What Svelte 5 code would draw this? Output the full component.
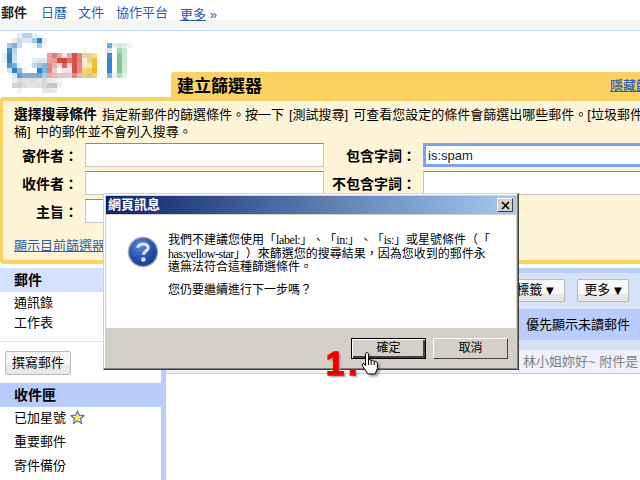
<script>
  const rows = [
    "3:e8f0f6 4:b5d6ee 5:b5d6ee 6:e8f0f6",
    "2:e4edf4 3:c8dcec 4:dde8f0 5:dde8f0 6:a8cbe4 7:2a85c8 8:e6eef4",
    "1:a8c8e4 2:80b4dc 3:c8dcec 6:f0f4f8 7:a8cce4 8:f4f6f8 21:70aadc 22:e8eef4 23:d0ecd8 24:e0f0e4 25:f0f6f2",
    "1:3f8fcc 2:b8d4e8 16:fbf6e0 21:d8e4ee 23:a0dcb0 24:c8e8d0",
    "0:e8eff4 1:2a80c4 2:c8dce8 9:e4a0a0 10:e07c78 11:e8a4a0 12:f8e8e8 13:e4a8a8 14:d0554e 15:dd8a7a 16:e8d8a0 17:e0d0a0 18:f4dc90 21:3b8fcc 23:84cc9c 24:c8e8d0",
    "0:eef2f6 1:2a80c4 2:d0e0ec 6:e8f0f6 7:d8e6f0 8:d8e8f0 9:e6a0a0 10:e89898 11:d84a40 12:d8443c 13:e07070 14:d85048 15:e07e78 16:fff4d0 17:f0d888 18:f0c040 21:2f88c8 23:78c890 24:c8e8d0",
    "1:4c98d0 2:78b0d8 3:f0f4f8 6:c0d8e8 7:a0c4e0 8:80b4d8 9:e08888 10:eab0b0 11:f6e0e0 12:dc6860 13:e8d8d8 14:d85048 15:e88880 16:f8ecc8 17:f8e8b0 18:f0c030 21:2f88c8 23:78c890 24:d0ecd8",
    "1:d0e0ec 2:2a80c4 3:88b8dc 4:f0f4f8 7:2a85c8 8:80b4d8 9:e08080 10:f0c8c8 12:f0e4e4 13:f0e0e0 14:d05048 15:e88880 16:f6d878 17:f4d060 18:f0b820 21:2f88c8 23:78c890 24:d0ecd8",
    "2:dde8f0 3:5a9ccc 4:80b0d8 5:80b0d8 6:80b0d8 7:70a8d0 8:b0cce0 9:e4a8a8 10:e8b8b8 11:d8cccc 12:d8cccc 13:dcd0d0 14:d88888 15:e8b8b8 16:e4d090 17:e0c880 18:e4d090 21:80b4dc 22:f0f0f0 23:b0dcbc 24:e4f0e8",
    "2:eeeeee 3:d8d8d8 4:e0e0e0 5:e0e0e0 6:dcdcdc 7:e4e4e4 8:d8d8d8 9:e8e8e8 10:f0f0f0 11:f4f4f4",
    "2:d4d4d4 3:d0d0d0 4:dcdcdc 5:e4e4e4 6:e4e4e4 7:dcdcdc 8:d8d8d8 9:c8c8c8 10:c4c4c4 11:f0f0f0",
    "3:f4f4f4 8:e8e8e8 9:e4e4e4 10:ececec"
  ];
  const cells = rows.flatMap((row, r) =>
    row.split(" ").map((item) => {
      const [c, color] = item.split(":");
      return { x: Number(c) * 5, y: r * 5, color: "#" + color };
    })
  );
</script>

<div class="page">
  <nav class="topbar">
    <b class="current">郵件</b>
    <a href="#a" class="t1">日曆</a>
    <a href="#a" class="t2">文件</a>
    <a href="#a" class="t3">協作平台</a>
    <a href="#a" class="more"><u>更多</u> »</a>
  </nav>

  <header class="head">
    <svg class="logo" width="130" height="60" viewBox="0 0 130 60" shape-rendering="crispEdges" role="img" aria-label="Gmail">
      {#each cells as cell}
        <rect x={cell.x} y={cell.y} width="5" height="5" fill={cell.color} />
      {/each}
    </svg>
    <div class="tab">
      <h1>建立篩選器</h1>
      <a href="#a" class="hide">隱藏篩選器</a>
    </div>
  </header>

  <section class="panel">
    <p class="intro"><b>選擇搜尋條件</b> 指定新郵件的篩選條件。按一下 [測試搜尋] 可查看您設定的條件會篩選出哪些郵件。[垃圾郵件<br />桶] 中的郵件並不會列入搜尋。</p>
    <div class="form">
      <label class="l1">寄件者：</label>
      <div class="field"></div>
      <label class="l2">包含字詞：</label>
      <div class="field focus">is:spam</div>
      <label class="l1">收件者：</label>
      <div class="field"></div>
      <label class="l2">不包含字詞：</label>
      <div class="field"></div>
      <label class="l1">主旨：</label>
      <div class="field"></div>
    </div>
    <a href="#a" class="show">顯示目前篩選器</a>
  </section>

  <div class="lower">
    <aside class="side">
      <div class="mail"><b>郵件</b></div>
      <div class="item first">通訊錄</div>
      <div class="item">工作表</div>
      <div class="rule"></div>
      <div class="compose">撰寫郵件</div>
      <div class="inbox"><b>收件匣</b></div>
      <div class="label">已加星號
        <svg class="star" width="15" height="15" viewBox="0 0 15 15">
          <path d="M7.5 1 L9.4 5.2 L14 5.7 L10.6 8.8 L11.6 13.5 L7.5 11.1 L3.4 13.5 L4.4 8.8 L1 5.7 L5.6 5.2 Z" fill="#fbe85a" stroke="#4a78b8" stroke-width="1.2" stroke-linejoin="round" />
        </svg>
      </div>
      <div class="label">重要郵件</div>
      <div class="label">寄件備份</div>
    </aside>

    <main class="main">
      <div class="inner">
        <div class="toolbar">
          <div class="btn tag">標籤 <i>▼</i></div>
          <div class="btn mo">更多 <i>▼</i></div>
        </div>
        <div class="band">優先顯示未讀郵件</div>
        <div class="thin"></div>
      </div>
      <div class="msg">- 林小姐妳好~ 附件是</div>
    </main>
  </div>

  <div class="dialog" role="dialog">
    <div class="title">
      <span>網頁訊息</span>
      <div class="close">
        <svg width="9" height="9" viewBox="0 0 9 9"><path d="M1 1 L8 8 M8 1 L1 8" stroke="#000" stroke-width="1.6" /></svg>
      </div>
    </div>
    <div class="body">
      <svg class="qicon" width="32" height="32" viewBox="0 0 34 34">
        <defs>
          <radialGradient id="q" cx="40%" cy="30%" r="75%">
            <stop offset="0" stop-color="#5c88dc" />
            <stop offset="0.6" stop-color="#2450ac" />
            <stop offset="1" stop-color="#153a8c" />
          </radialGradient>
        </defs>
        <circle cx="17" cy="17" r="15.5" fill="url(#q)" stroke="#a8a8b0" stroke-width="1.5" />
        <path d="M11.5 12.5 C11.5 7.5 22.5 7 22.5 12.5 C22.5 16 17.5 16 17.5 20" fill="none" stroke="#dfe4ee" stroke-width="3.4" />
        <circle cx="17.4" cy="25" r="2.4" fill="#dfe4ee" />
      </svg>
      <div class="text">
        <p>我們不建議您使用「<span class="lat">label:</span>」、「<span class="lat">in:</span>」、「<span class="lat">is:</span>」或星號條件（「<br /><span class="lat2">has:yellow-star</span>」）來篩選您的搜尋結果，因為您收到的郵件永<br />遠無法符合這種篩選條件。</p>
        <p class="ask">您仍要繼續進行下一步嗎？</p>
      </div>
    </div>
    <div class="foot">
      <div class="wbtn default">確定</div>
      <div class="wbtn">取消</div>
    </div>
  </div>

  <div class="step">1.</div>
  <svg class="hand" width="22" height="28" viewBox="0 0 22 28">
    <path d="M5.5 3.5 Q7 1.2 8.5 3.5 V10 Q10 8.8 11.2 10.5 Q13 9.4 14.2 11.5 Q16 10.6 17.4 12.8 V18.5 L15.2 24 H8.2 L2.8 16.5 Q1.4 13.4 3.4 13.4 L5.5 15.5 Z" fill="#fff" stroke="#000" stroke-width="1" stroke-linejoin="round" />
    <path d="M8.5 10 V15 M11.2 10.5 V15 M14.2 11.5 V15" stroke="#000" stroke-width="1" fill="none" />
  </svg>
</div>

<style>
  :global(body) {
    margin: 0;
    background: #fff;
  }
  .page {
    position: relative;
    width: 640px;
    height: 480px;
    overflow: hidden;
    font: 13px/16px "Liberation Sans", "Noto Sans CJK TC", sans-serif;
    color: #000;
    background: #fff;
  }
  a {
    color: #2a5db0;
    text-decoration: none;
  }
  p {
    margin: 0;
  }
  .topbar {
    display: flex;
    box-sizing: border-box;
    height: 31px;
    padding-top: 5px;
    border-bottom: 1px solid #c3d9ff;
    white-space: nowrap;
    background: linear-gradient(#fff 20px, #f4f6f4 20px);
  }
  .current {
    margin-left: 1px;
    color: #222;
  }
  .t1 { margin-left: 14px; }
  .t2 { margin-left: 11px; }
  .t3 { margin-left: 12px; }
  .more { margin-left: 12px; padding-top: 2px; }
  .head {
    display: flex;
    align-items: flex-end;
    height: 66px;
    position: relative;
  }
  .logo {
    position: absolute;
    left: 2px;
    top: 2px;
  }
  .tab {
    display: flex;
    justify-content: space-between;
    box-sizing: border-box;
    width: 469px;
    height: 25px;
    margin-left: 171px;
    padding: 5px 0 0 6px;
    background: #fad163;
    border-radius: 3px 0 0 0;
    white-space: nowrap;
    overflow: hidden;
  }
  h1 {
    margin: 0;
    font-size: 17px;
    line-height: 20px;
    font-weight: 700;
  }
  .hide {
    margin-top: 1px;
    width: 30px;
    overflow: hidden;
    text-decoration: underline;
    font-weight: 500;
  }
  .panel {
    box-sizing: border-box;
    height: 167px;
    padding: 5px 0 0 11px;
    background: #fef5d8;
    border: solid #fad163;
    border-width: 4px 0 4px 3px;
    border-radius: 4px 0 0 4px;
    overflow: hidden;
  }
  .intro {
    width: 640px;
    white-space: nowrap;
    line-height: 17px;
    word-spacing: 1.5px;
  }
  .intro b {
    font-size: 13.8px;
  }
  .form {
    display: grid;
    grid-template-columns: 64px 239px 85px 240px;
    grid-auto-rows: 24px;
    gap: 4px 7px;
    margin-top: 3px;
  }
  label {
    text-align: right;
    font-weight: 700;
    font-size: 14px;
    line-height: 26px;
    white-space: nowrap;
  }
  .field {
    box-sizing: border-box;
    background: #fff;
    border: 1px solid #c9c6bd;
    border-top-color: #8a8a86;
    line-height: 22px;
    white-space: nowrap;
  }
  .focus {
    border: 3px solid #7aa4f2;
    padding-left: 2px;
    line-height: 20px;
    color: #222;
  }
  .show {
    display: block;
    margin-top: 15px;
    text-decoration: underline;
    white-space: nowrap;
  }
  .lower {
    display: flex;
    margin-top: 4px;
    height: 212px;
  }
  .side {
    flex: 0 0 161px;
  }
  .mail {
    height: 24px;
    padding-left: 14px;
    line-height: 24px;
    font-size: 14px;
    background: repeating-conic-gradient(#dce6fd 0 25%, #cfdcfb 0 50%) 0 0 / 2px 2px;
  }
  .item {
    height: 20px;
    padding-left: 14px;
    line-height: 20px;
  }
  .item.first {
    margin-top: 1px;
  }
  .rule {
    margin-top: 8px;
    border-top: 1px solid #d9e4fb;
  }
  .compose {
    box-sizing: border-box;
    width: 66px;
    height: 24px;
    margin: 9px 0 8px 5px;
    border: 1px solid #bbb;
    border-radius: 2px;
    background: linear-gradient(#f6f6f6 60%, #e8e8e8 60%);
    text-align: center;
    line-height: 21px;
  }
  .inbox {
    height: 24px;
    padding-left: 14px;
    line-height: 24px;
    font-size: 14px;
    background: #b9cdfc;
  }
  .label {
    display: flex;
    align-items: center;
    gap: 4px;
    height: 24px;
    padding-left: 14px;
    font-size: 13px;
    position: relative;
    top: -1px;
  }
  .star {
    margin-top: -1px;
  }
  .main {
    flex: 1;
    min-width: 0;
    border-left: 5px solid #b9cdfc;
  }
  .inner {
    height: 77px;
    border-top: 5px solid #b9cdfc;
    display: flex;
    flex-direction: column;
    background: repeating-conic-gradient(#dce6fd 0 25%, #cfdcfb 0 50%) 0 0 / 2px 2px;
  }
  .toolbar {
    display: flex;
    justify-content: flex-end;
    gap: 12px;
    height: 36px;
    padding: 6px 11px 0 0;
    box-sizing: border-box;
  }
  .btn {
    box-sizing: border-box;
    height: 23px;
    border: 1px solid #bbb;
    border-radius: 2px;
    background: linear-gradient(#f8f8f8 65%, #e6e6e6 65%);
    text-align: center;
    line-height: 20px;
    white-space: nowrap;
  }
  .btn i {
    font-style: normal;
    font-size: 10px;
    font-family: "DejaVu Sans", sans-serif;
  }
  .tag { width: 60px; }
  .mo { width: 52px; }
  .band {
    height: 31px;
    padding-right: 10px;
    background: #b9cdfc;
    text-align: right;
    line-height: 31px;
    white-space: nowrap;
  }
  .thin {
    height: 5px;
  }
  .msg {
    box-sizing: border-box;
    height: 24px;
    padding-left: 349px;
    line-height: 24px;
    background: #eef1fa;
    border-bottom: 1px solid #c9cbd6;
    color: #808080;
    white-space: nowrap;
    overflow: hidden;
  }
  .dialog {
    position: absolute;
    left: 103px;
    top: 193px;
    box-sizing: border-box;
    width: 416px;
    height: 177px;
    display: flex;
    flex-direction: column;
    padding: 2px;
    background: #d4d0c8;
    border: 1px solid;
    border-color: #d4d0c8 #404040 #404040 #d4d0c8;
    box-shadow: inset -1px -1px 0 #808080, inset 1px 1px 0 #fff;
  }
  .title {
    display: flex;
    align-items: center;
    justify-content: space-between;
    flex: 0 0 18px;
    padding: 0 3px 0 2px;
    background: linear-gradient(90deg, #0a246a, #a6caf0);
    color: #fff;
    font-weight: 700;
    font-size: 13px;
  }
  .close {
    display: flex;
    align-items: center;
    justify-content: center;
    box-sizing: border-box;
    width: 16px;
    height: 14px;
    background: #d4d0c8;
    border: 1px solid;
    border-color: #fff #404040 #404040 #fff;
  }
  .body {
    display: flex;
    flex: 0 0 113px;
    margin-top: 1px;
    background: #fff;
    font-family: "Liberation Serif", "Noto Sans CJK TC", serif;
    font-size: 12px;
    line-height: 13.5px;
    white-space: nowrap;
    text-spacing-trim: space-all;
  }
  .lat {
    letter-spacing: -0.4px;
  }
  .lat2 {
    letter-spacing: -0.5px;
  }
  .qicon {
    margin: 21px 0 0 21px;
  }
  .text {
    margin: 19px 0 0 9px;
  }
  .ask {
    margin-top: 9px;
  }
  .foot {
    display: flex;
    justify-content: flex-end;
    gap: 7px;
    flex: 1;
    padding: 10px 8px 0 0;
  }
  .wbtn {
    box-sizing: border-box;
    width: 75px;
    height: 21px;
    border: 1px solid;
    border-color: #fff #404040 #404040 #fff;
    text-align: center;
    font-size: 12px;
    line-height: 18px;
  }
  .default {
    border: 1px solid #000;
    box-shadow: inset 1px 1px 0 #fff, inset -2px -2px 0 #404040;
  }
  .step {
    position: absolute;
    left: 326px;
    top: 344px;
    font: 700 33px/40px "Liberation Sans", sans-serif;
    letter-spacing: 4px;
    color: #f00000;
    -webkit-text-stroke: 1.4px #f00000;
    text-shadow: 2px 2px 2px #999;
  }
  .hand {
    position: absolute;
    left: 360px;
    top: 350px;
    filter: drop-shadow(2px 2px 1px rgba(0, 0, 0, 0.35));
  }
</style>
